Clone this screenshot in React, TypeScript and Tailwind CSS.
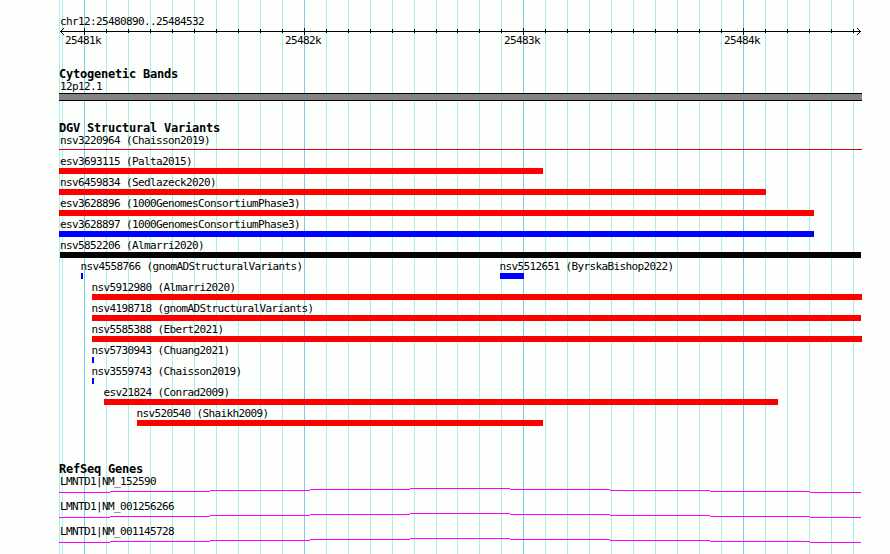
interface Feature {
  name: string;
  start: number;
  end: number;
  color: string;
  thin?: boolean;
}

const GRID_LINES = [
  59, 62, 84, 106, 128, 150, 172, 194, 216, 238, 260, 282, 304, 326, 348, 370, 392, 414, 436, 457, 479, 501, 523, 545,
  567, 589, 611, 633, 655, 677, 699, 721, 743, 765, 787, 809, 831, 853,
];
const MAJOR = [84, 304, 523, 743];

const SCALE_LABELS = ["25481k", "25482k", "25483k", "25484k"];

const RED = "bg-[#ff0000]";
const BLUE = "bg-[#0000ff]";
const BLACK = "bg-[#040004]";

// each inner array is one row of the track
const VARIANTS: Feature[][] = [
  [{ name: "nsv3220964 (Chaisson2019)", start: 59, end: 862, color: "bg-[#e00410]", thin: true }],
  [{ name: "esv3693115 (Palta2015)", start: 59, end: 543, color: RED }],
  [{ name: "nsv6459834 (Sedlazeck2020)", start: 59, end: 766, color: RED }],
  [{ name: "esv3628896 (1000GenomesConsortiumPhase3)", start: 59, end: 814, color: RED }],
  [{ name: "esv3628897 (1000GenomesConsortiumPhase3)", start: 59, end: 814, color: BLUE }],
  [{ name: "nsv5852206 (Almarri2020)", start: 60, end: 861, color: BLACK }],
  [
    { name: "nsv4558766 (gnomADStructuralVariants)", start: 81, end: 83, color: BLUE },
    { name: "nsv5512651 (ByrskaBishop2022)", start: 500, end: 524, color: BLUE },
  ],
  [{ name: "nsv5912980 (Almarri2020)", start: 92, end: 862, color: RED }],
  [{ name: "nsv4198718 (gnomADStructuralVariants)", start: 92, end: 861, color: RED }],
  [{ name: "nsv5585388 (Ebert2021)", start: 92, end: 862, color: RED }],
  [{ name: "nsv5730943 (Chuang2021)", start: 92, end: 94, color: BLUE }],
  [{ name: "nsv3559743 (Chaisson2019)", start: 92, end: 94, color: BLUE }],
  [{ name: "esv21824 (Conrad2009)", start: 104, end: 778, color: RED }],
  [{ name: "nsv520540 (Shaikh2009)", start: 137, end: 543, color: RED }],
];

const GENES = ["LMNTD1|NM_152590", "LMNTD1|NM_001256266", "LMNTD1|NM_001145728"];

// [x, width, y] of the intron line steps
const INTRON_STEPS = [
  [59, 51, 4],
  [110, 100, 3],
  [210, 100, 2],
  [310, 100, 1],
  [410, 100, 0],
  [510, 100, 1],
  [610, 100, 2],
  [710, 100, 3],
  [810, 51, 4],
];

function Grid() {
  return (
    <svg className="absolute inset-0" width="890" height="554" shapeRendering="crispEdges">
      {GRID_LINES.map((x) => (
        <rect key={x} x={x} y="0" width="1" height="554" fill={MAJOR.includes(x) ? "#7ecae8" : "#aceeea"} />
      ))}
    </svg>
  );
}

function Ruler() {
  return (
    <svg className="block" width="890" height="7" shapeRendering="crispEdges" fill="#000">
      <rect x="60" y="3" width="801" height="1" />
      {GRID_LINES.slice(2).map((x) =>
        MAJOR.includes(x) ? (
          <rect key={x} x={x} y="0" width="1" height="7" />
        ) : (
          <rect key={x} x={x} y="1" width="1" height="4" />
        )
      )}
      {[1, 2, 3].map((d) => (
        <g key={d}>
          <rect x={60 + d} y={3 - d} width="1" height="1" />
          <rect x={60 + d} y={3 + d} width="1" height="1" />
          <rect x={860 - d} y={3 - d} width="1" height="1" />
          <rect x={860 - d} y={3 + d} width="1" height="1" />
        </g>
      ))}
    </svg>
  );
}

function TrackTitle({ children }: { children: string }) {
  return (
    <h2 className="h-3.5 pl-[59px] text-[12px] leading-[14px] font-bold tracking-[-0.224px]">{children}</h2>
  );
}

function VariantRow({ features }: { features: Feature[] }) {
  return (
    <div className="grid h-[21px]">
      {features.map((f) => (
        <div key={f.name} className="col-start-1 row-start-1" style={{ paddingLeft: f.start }}>
          <div className="h-[15px] pt-0.5 leading-[13px]" style={{ marginLeft: f.start === 59 ? 1 : f.start === 60 ? 0 : -0.5 }}>
            {f.name}
          </div>
          <div className={f.thin ? "pt-0.5" : ""}>
            <div className={`${f.thin ? "h-px" : "h-1.5"} ${f.color}`} style={{ width: f.end - f.start }} />
          </div>
        </div>
      ))}
    </div>
  );
}

function GeneRow({ name }: { name: string }) {
  return (
    <div className="h-[25px]">
      <div className="h-[13px] pl-[60px] leading-[13px]">{name}</div>
      <svg className="block" width="890" height="5" shapeRendering="crispEdges" fill="#ff00ff">
        {INTRON_STEPS.map(([x, w, y]) => (
          <rect key={x} x={x} y={y} width={w} height="1" />
        ))}
      </svg>
    </div>
  );
}

export default function App() {
  return (
    <div className="relative h-[554px] w-[890px] overflow-hidden bg-[#fcfffc] font-['DejaVu_Sans_Mono',monospace] text-[11px] whitespace-pre text-black tracking-[-0.623px]">
      <Grid />
      <div className="relative flex flex-col">
        <header className="h-[67px] pt-[15px]">
          <div className="h-[13px] pl-[60px] leading-[13px]">chr12:25480890..25484532</div>
          <Ruler />
          <div className="-mt-px flex pl-[65px] leading-[13px]">
            {SCALE_LABELS.map((label, i) => (
              <span key={label} className={i === 1 ? "w-[219px] shrink-0" : "w-[220px] shrink-0"}>
                {label}
              </span>
            ))}
          </div>
        </header>

        <section className="h-[54px]">
          <TrackTitle>Cytogenetic Bands</TrackTitle>
          <div className="h-3 pl-[60px] leading-[12px]">12p12.1</div>
          <div className="ml-[59px] h-2 w-[803px] border-y border-black bg-[#848284]" />
        </section>

        <section className="h-[341px]">
          <TrackTitle>DGV Structural Variants</TrackTitle>
          <div className="-mt-[3px]">
            {VARIANTS.map((row) => (
              <VariantRow key={row[0].name} features={row} />
            ))}
          </div>
        </section>

        <section>
          <TrackTitle>RefSeq Genes</TrackTitle>
          <div className="-mt-px">
            {GENES.map((name) => (
              <GeneRow key={name} name={name} />
            ))}
          </div>
        </section>
      </div>
    </div>
  );
}
